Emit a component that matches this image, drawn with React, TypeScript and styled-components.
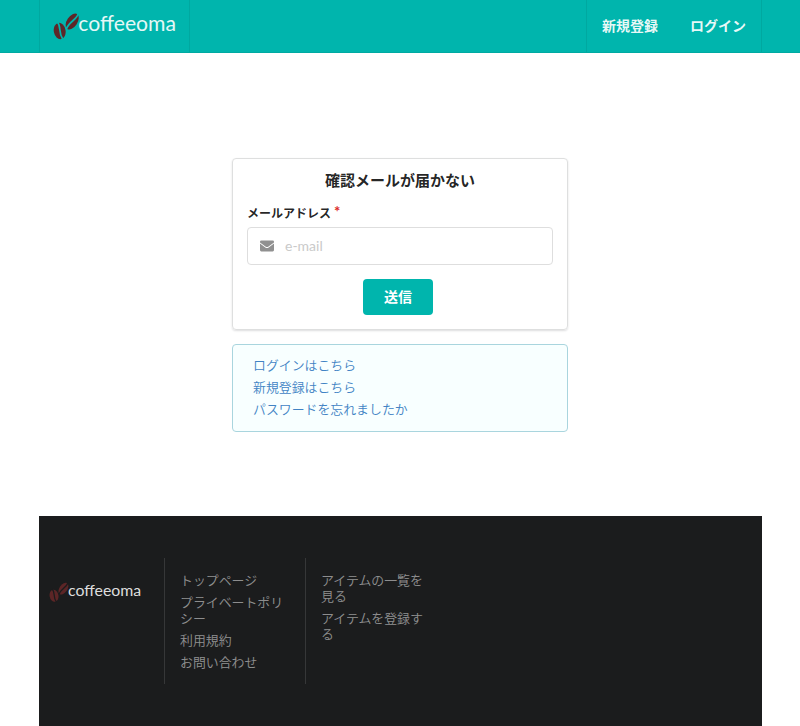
import React from "react";
import styled, { createGlobalStyle } from "styled-components";

const GlobalStyle = createGlobalStyle`
  *, *::before, *::after { box-sizing: border-box; }
  html, body { margin: 0; height: 726px; overflow: hidden; background: #fff; }
  body {
    font-family: Lato, "Noto Sans CJK JP", sans-serif;
    font-size: 14px;
    line-height: 20px;
    color: rgba(0, 0, 0, 0.87);
  }
`;

const Page = styled.div`
  display: flex;
  flex-direction: column;
  height: 726px;
`;

const Header = styled.header`
  height: 53px;
  flex: none;
  padding: 0 38px 0 39px;
  background: #00b5ad;
  border-bottom: 1px solid #00aaa2;
`;

const Nav = styled.nav`
  display: flex;
  height: 52px;
  border: solid #00a8a0;
  border-width: 0 1px;
`;

const Brand = styled.a`
  display: flex;
  width: 150px;
  border-right: 1px solid #00a8a0;
  padding: 10px 0 0 13px;
`;

const Account = styled.div`
  display: flex;
  margin-left: auto;
  width: 175px;
  border-left: 1px solid #00a8a0;
  padding-left: 15px;
  gap: 32px;
`;

const NavLink = styled.a`
  color: rgba(255, 255, 255, 0.92);
  font-weight: 700;
  line-height: 51px;
  white-space: nowrap;
`;

const Main = styled.main`
  width: 336px;
  margin: 105px auto 0;
  flex: none;
`;

const Segment = styled.form`
  height: 172px;
  padding: 12px 14px 13px;
  border: 1px solid #dedfdf;
  border-radius: 4px;
  box-shadow: 0 1px 2px rgba(34, 36, 38, 0.15);
`;

const Title = styled.h1`
  margin: 0;
  text-align: center;
  font-size: 15px;
  line-height: 18px;
`;

const Label = styled.label`
  display: flex;
  margin: 15px 0 4px;
  font-size: 12px;
  font-weight: 700;
  line-height: 19px;
`;

const Required = styled.span`
  color: #db2828;
  margin-left: 3px;
  font-size: 15px;
  line-height: 14px;
`;

const Field = styled.div`
  display: flex;
  align-items: center;
  height: 38px;
  padding: 0 12px 0 12px;
  gap: 11px;
  border: 1px solid #dedede;
  border-radius: 4px;
`;

const Input = styled.input`
  flex: 1;
  min-width: 0;
  border: 0;
  padding: 0 0 2px;
  outline: 0;
  background: none;
  font: 14px/17px Lato, sans-serif;
  &::placeholder { color: #cacaca; opacity: 1; }
`;

const Submit = styled.button`
  display: block;
  width: 70px;
  height: 36px;
  margin: 14px auto 0 116px;
  padding: 0;
  border: 0;
  border-radius: 4px;
  background: #00b5ad;
  color: #fff;
  font: 700 14px/14px Lato, "Noto Sans CJK JP", sans-serif;
`;

const Message = styled.section`
  height: 88px;
  margin-top: 14px;
  padding: 9px 20px;
  background: #f8ffff;
  border: 1px solid #a9d5de;
  border-radius: 4px;
`;

const LinkLine = styled.a`
  display: block;
  font-size: 12.9px;
  font-weight: 350;
  line-height: 22px;
  color: #4183c4;
`;

const Footer = styled.footer`
  display: flex;
  flex: none;
  height: 210px;
  margin: 84px 38px 0 39px;
  padding-top: 42px;
  background: #1b1c1d;
`;

const FooterBrand = styled.div`
  width: 125px;
  padding: 22px 0 0 10px;
`;

const FooterColumn = styled.nav`
  width: 141px;
  height: 126px;
  padding: 14px 20px 0 15px;
  border-left: 1px solid #363738;
`;

const FooterLink = styled.a`
  display: block;
  margin-bottom: 6px;
  font-size: 12.9px;
  font-weight: 350;
  line-height: 16px;
  color: rgba(255, 255, 255, 0.52);
  word-break: break-all;
`;

function Logo({ width, height, muted = false }: { width: number; height: number; muted?: boolean }) {
  const crease = muted ? "#1b1c1d" : "#00b5ad";
  return (
    <svg width={width} height={height} viewBox="0 0 124 32" role="img" aria-label="coffeeoma">
      <g fill={muted ? "#5c2526" : "#5d2728"}>
        <g transform="rotate(-10 6.7 21)">
          <ellipse cx="6.7" cy="21" rx="5.9" ry="8.2" />
          <path d="M6 12 C9.4 17 4.6 21.5 8.4 30" fill="none" stroke={crease} strokeWidth="1.7" />
        </g>
        <g transform="rotate(34 19.2 11.5)">
          <ellipse cx="19.2" cy="11.5" rx="5.2" ry="8.9" />
          <path d="M20 2 C21.8 8 16.6 13.5 18.6 21" fill="none" stroke={crease} strokeWidth="1.8" />
        </g>
      </g>
      <text
        x="25.3"
        y="20.8"
        textLength="97.7"
        lengthAdjust="spacingAndGlyphs"
        fontFamily="Lato, sans-serif"
        fontSize="21.5"
        fill={muted ? "#dedede" : "#e5f8f7"}
      >
        coffeeoma
      </text>
    </svg>
  );
}

const Envelope = () => (
  <svg width="14" height="12" viewBox="0 0 14 12" fill="#909090">
    <path d="M1.3 .5h11.4q1.3 0 1.3 1.2v.8L8.2 6.7q-1.2.8-2.4 0L0 2.5v-.8Q0 .5 1.3.5Z" />
    <path d="M0 3.6l5.3 3.9q1.7 1.1 3.4 0L14 3.6v6.5q0 1.3-1.3 1.3H1.3Q0 11.4 0 10.1Z" />
  </svg>
);

const helpLinks = ["ログインはこちら", "新規登録はこちら", "パスワードを忘れましたか"];
const footerColumns = [
  ["トップページ", "プライベートポリシー", "利用規約", "お問い合わせ"],
  ["アイテムの一覧を見る", "アイテムを登録する"],
];

export default function App() {
  return (
    <Page>
      <GlobalStyle />
      <Header>
        <Nav>
          <Brand><Logo width={124} height={32} /></Brand>
          <Account>
            <NavLink>新規登録</NavLink>
            <NavLink>ログイン</NavLink>
          </Account>
        </Nav>
      </Header>
      <Main>
        <Segment>
          <Title>確認メールが届かない</Title>
          <Label htmlFor="email">メールアドレス<Required>*</Required></Label>
          <Field>
            <Envelope />
            <Input id="email" type="email" placeholder="e-mail" />
          </Field>
          <Submit type="button">送信</Submit>
        </Segment>
        <Message>
          {helpLinks.map((text) => <LinkLine key={text}>{text}</LinkLine>)}
        </Message>
      </Main>
      <Footer>
        <FooterBrand><Logo width={93} height={24} muted /></FooterBrand>
        {footerColumns.map((links) => (
          <FooterColumn key={links[0]}>
            {links.map((text) => <FooterLink key={text}>{text}</FooterLink>)}
          </FooterColumn>
        ))}
      </Footer>
    </Page>
  );
}
